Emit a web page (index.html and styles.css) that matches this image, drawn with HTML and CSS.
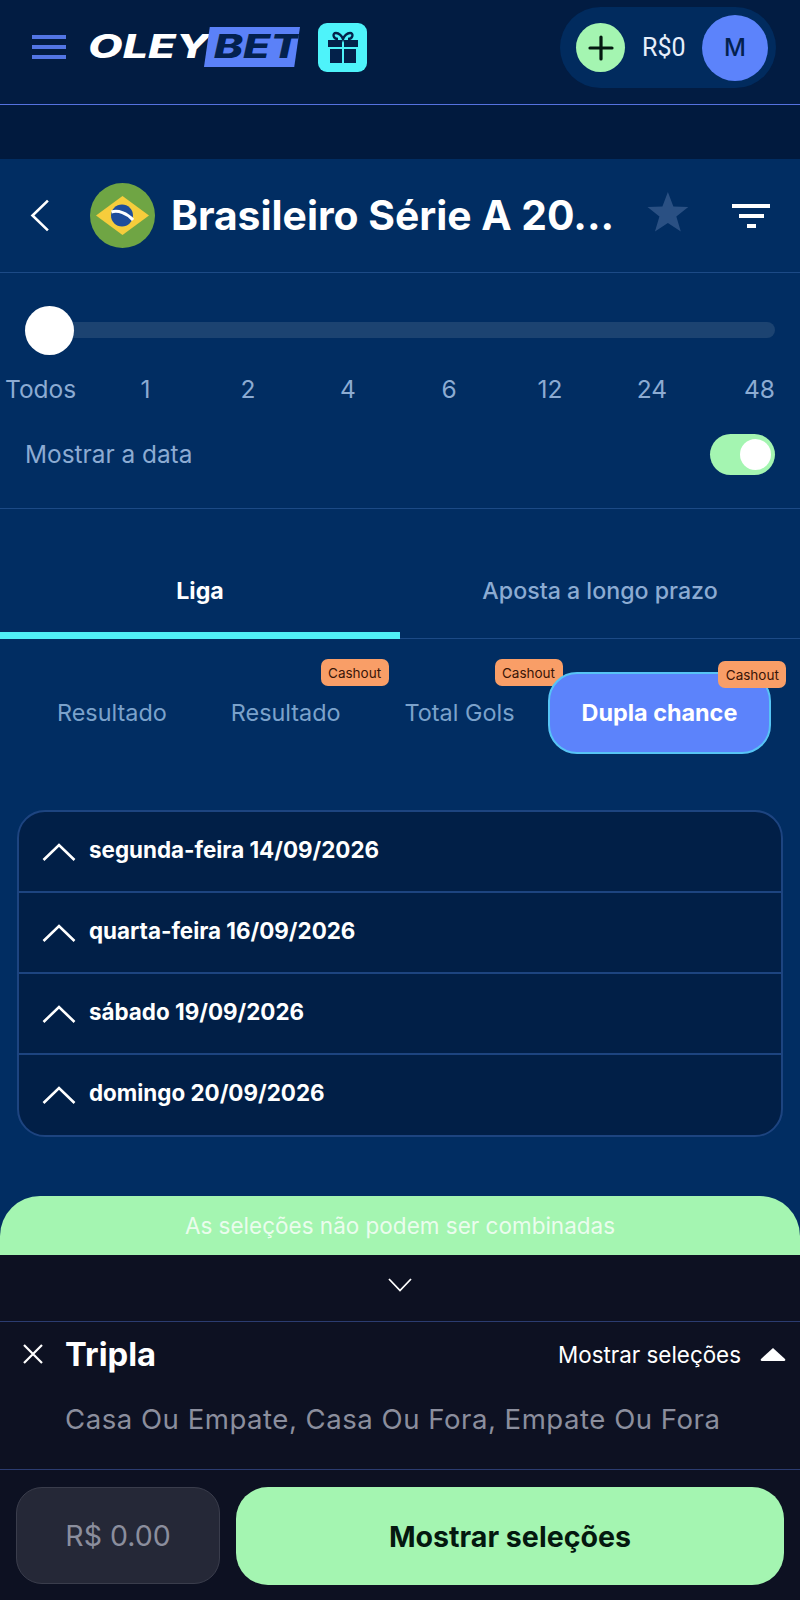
FILE: index.html

```html
<!DOCTYPE html>
<html lang="pt-BR">
<head>
    <meta charset="UTF-8">
    <meta name="viewport" content="width=device-width, initial-scale=1.0">
    <title>OleyBet</title>
    <link rel="stylesheet" href="styles.css">
</head>
<body>
    <div class="page">
        <header class="topbar">
            <div class="burger"><span></span><span></span><span></span></div>
            <div class="logo">
                <span class="logo-oley">OLEY</span>
                <span class="logo-bet"><span class="logo-bet-text">BET</span></span>
            </div>
            <div class="gift">
                <svg width="36" height="36" viewBox="0 0 36 36">
                    <path d="M13 9 C8 9 7 3 11 3 C14 3 17 6 18 9 C19 6 22 3 25 3 C29 3 28 9 23 9" fill="none" stroke="#03214a" stroke-width="2.4"/>
                    <rect x="3" y="10" width="14" height="7" fill="#03214a"/>
                    <rect x="19" y="10" width="14" height="7" fill="#03214a"/>
                    <rect x="5" y="19" width="12" height="14" fill="#03214a"/>
                    <rect x="19" y="19" width="12" height="14" fill="#03214a"/>
                </svg>
            </div>
            <div class="wallet">
                <div class="wallet-add">
                    <svg width="26" height="26" viewBox="0 0 26 26"><path d="M13 2 V24 M2 13 H24" stroke="#04180f" stroke-width="3.2" stroke-linecap="round"/></svg>
                </div>
                <span class="wallet-amount">R$0</span>
                <div class="avatar">M</div>
            </div>
        </header>

        <div class="spacer"></div>

        <main class="panel">
            <section class="title-row">
                <svg class="back" width="20" height="33" viewBox="0 0 20 33"><path d="M18 1.5 L2.5 16.5 L18 31.5" fill="none" stroke="#fff" stroke-width="2.6"/></svg>
                <svg class="flag" width="65" height="65" viewBox="0 0 65 65">
                    <circle cx="32.5" cy="32.5" r="32.5" fill="#6fa544"/>
                    <path d="M32.5 13 L59 32.5 L32.5 52 L6 32.5 Z" fill="#f6cd3c"/>
                    <circle cx="32" cy="32.5" r="11" fill="#1f4d9b"/>
                    <path d="M21.5 29 C28 27 37 30 43 37" fill="none" stroke="#fff" stroke-width="3"/>
                </svg>
                <h1 class="league">Brasileiro Série A 20...</h1>
                <svg class="star" width="42" height="40" viewBox="0 0 42 40"><path d="M21 0 L26.5 14.5 L41.5 15 L29.5 24.5 L34 39.5 L21 31 L8 39.5 L12.5 24.5 L0.5 15 L15.5 14.5 Z" fill="#2a5083"/></svg>
                <div class="filter"><span></span><span></span><span></span></div>
            </section>

            <section class="range">
                <div class="slider"><span class="slider-thumb"></span></div>
                <div class="slider-labels">
                    <span class="first">Todos</span>
                    <span>1</span>
                    <span>2</span>
                    <span>4</span>
                    <span>6</span>
                    <span>12</span>
                    <span>24</span>
                    <span class="last">48</span>
                </div>
                <div class="date-row">
                    <span>Mostrar a data</span>
                    <div class="toggle"><span class="toggle-knob"></span></div>
                </div>
            </section>

            <nav class="tabs">
                <div class="tab active">Liga</div>
                <div class="tab">Aposta a longo prazo</div>
            </nav>

            <div class="markets">
                <div class="market">Resultado</div>
                <div class="market">Resultado<span class="badge">Cashout</span></div>
                <div class="market">Total Gols<span class="badge">Cashout</span></div>
                <div class="market selected">Dupla chance<span class="badge">Cashout</span></div>
            </div>

            <div class="days">
                <div class="day">
                    <svg width="34" height="20" viewBox="0 0 34 20"><path d="M1.5 18 L17 3 L32.5 18" fill="none" stroke="#fff" stroke-width="2.6"/></svg>
                    <span>segunda-feira 14/09/2026</span>
                </div>
                <div class="day">
                    <svg width="34" height="20" viewBox="0 0 34 20"><path d="M1.5 18 L17 3 L32.5 18" fill="none" stroke="#fff" stroke-width="2.6"/></svg>
                    <span>quarta-feira 16/09/2026</span>
                </div>
                <div class="day">
                    <svg width="34" height="20" viewBox="0 0 34 20"><path d="M1.5 18 L17 3 L32.5 18" fill="none" stroke="#fff" stroke-width="2.6"/></svg>
                    <span>sábado 19/09/2026</span>
                </div>
                <div class="day">
                    <svg width="34" height="20" viewBox="0 0 34 20"><path d="M1.5 18 L17 3 L32.5 18" fill="none" stroke="#fff" stroke-width="2.6"/></svg>
                    <span>domingo 20/09/2026</span>
                </div>
            </div>
        </main>

        <section class="slip">
            <div class="slip-notice">As seleções não podem ser combinadas</div>
            <div class="slip-collapse">
                <svg width="24" height="14" viewBox="0 0 24 14"><path d="M1 1 L12 12.5 L23 1" fill="none" stroke="#fff" stroke-width="1.8"/></svg>
            </div>
            <div class="slip-info">
                <div class="slip-head">
                    <svg class="slip-close" width="22" height="22" viewBox="0 0 22 22"><path d="M2 2 L20 20 M20 2 L2 20" stroke="#fff" stroke-width="2.2"/></svg>
                    <span class="slip-type">Tripla</span>
                    <span class="slip-show">Mostrar seleções</span>
                    <svg width="26" height="15" viewBox="0 0 26 15"><path d="M13 1 L25 12 Q26 14 24 14 L2 14 Q0 14 1 12 Z" fill="#fff"/></svg>
                </div>
                <div class="slip-picks">Casa Ou Empate, Casa Ou Fora, Empate Ou Fora</div>
            </div>
            <div class="slip-actions">
                <div class="stake">R$ 0.00</div>
                <button class="show-button">Mostrar seleções</button>
            </div>
        </section>
    </div>
</body>
</html>
```

FILE: styles.css

```css
* {
    box-sizing: border-box;
}
body {
    margin: 0;
    background: #011c42;
    font-family: Inter, "Noto Sans", sans-serif;
    color: #fff;
}
.page {
    width: 800px;
    height: 1600px;
    display: flex;
    flex-direction: column;
    overflow: hidden;
}

/* top bar */
.topbar {
    height: 105px;
    display: flex;
    align-items: flex-start;
    padding: 0 24px 0 32px;
    background: #021c42;
    border-bottom: 1px solid #5572e0;
}
.burger {
    width: 34px;
    margin-top: 35px;
    display: flex;
    flex-direction: column;
    gap: 6px;
}
.burger span {
    height: 4px;
    background: #5275e4;
}
.logo {
    width: 212px;
    height: 40px;
    margin: 27px 0 0 22px;
    display: flex;
    align-items: center;
    flex-shrink: 0;
}
.logo-oley {
    width: 116px;
    font-size: 32px;
    font-weight: 800;
    font-style: italic;
    line-height: 40px;
    transform: scaleX(1.4);
    transform-origin: left center;
}
.logo-bet {
    width: 96px;
    height: 40px;
    background: #5b81f8;
    clip-path: polygon(6% 0, 100% 0, 94% 100%, 0 100%);
    display: block;
    overflow: hidden;
}
.logo-bet-text {
    display: block;
    color: #03214f;
    font-size: 32px;
    font-weight: 800;
    font-style: italic;
    line-height: 40px;
    padding-left: 7px;
    transform: scaleX(1.38);
    transform-origin: left center;
}
.gift {
    width: 49px;
    height: 49px;
    margin: 23px 0 0 18px;
    border-radius: 9px;
    background: #4ef3fa;
    display: flex;
    align-items: center;
    justify-content: center;
}
.wallet {
    width: 216px;
    height: 81px;
    margin: 7px 0 0 auto;
    padding: 0 8px 0 16px;
    border-radius: 41px;
    background: #012b5e;
    display: flex;
    align-items: center;
}
.wallet-add {
    width: 49px;
    height: 49px;
    border-radius: 50%;
    background: #a4f5b1;
    display: flex;
    align-items: center;
    justify-content: center;
}
.wallet-amount {
    margin-left: 17px;
    font-family: Roboto, sans-serif;
    font-size: 25px;
    color: #e6eefa;
}
.avatar {
    width: 66px;
    height: 66px;
    margin-left: auto;
    border-radius: 50%;
    background: #5c83fb;
    color: #03214f;
    font-size: 24px;
    font-weight: 500;
    display: flex;
    align-items: center;
    justify-content: center;
}
.spacer {
    height: 54px;
    background: #011a3e;
}

/* league panel */
.panel {
    flex: 1;
    background: #012d62;
}
.title-row {
    height: 114px;
    display: flex;
    align-items: center;
    padding: 0 30px;
    border-bottom: 1px solid #1c4a86;
}
.flag {
    margin-left: 40px;
    flex-shrink: 0;
}
.league {
    width: 460px;
    margin: -2px 0 0 16px;
    font-size: 40.8px;
    font-weight: 700;
    white-space: nowrap;
}
.star {
    margin-left: 19px;
    margin-top: -8px;
}
.filter {
    margin-left: 43px;
    display: flex;
    flex-direction: column;
    align-items: center;
    gap: 6px;
    width: 38px;
    flex-shrink: 0;
}
.filter span {
    height: 4px;
    width: 38px;
    background: #fff;
}
.filter span:nth-child(2) {
    width: 25px;
}
.filter span:nth-child(3) {
    width: 9px;
}

.range {
    height: 236px;
    padding: 32px 25px 0 5px;
    border-bottom: 1px solid #1c4a86;
}
.slider {
    height: 16px;
    margin: 17px 0 0 20px;
    border-radius: 8px;
    background: #1c4371;
    position: relative;
}
.slider-thumb {
    position: absolute;
    left: 0;
    top: -16px;
    width: 49px;
    height: 49px;
    border-radius: 50%;
    background: #fff;
}
.slider-labels {
    margin-top: 37px;
    display: grid;
    grid-template-columns: 88px 105px 100px 100px 102px 100px 104px 71px;
    font-size: 24.5px;
    line-height: 28px;
    color: #8cabd2;
    text-align: center;
}
.slider-labels .first {
    text-align: left;
}
.slider-labels .last {
    text-align: right;
}
.date-row {
    margin: 30px 0 0 20px;
    display: flex;
    justify-content: space-between;
    align-items: center;
    font-size: 24.4px;
    color: #8cabd2;
}
.toggle {
    width: 65px;
    height: 41px;
    margin-top: 1px;
    border-radius: 21px;
    background: #a4f5b1;
    position: relative;
}
.toggle-knob {
    position: absolute;
    right: 4px;
    top: 5px;
    width: 31px;
    height: 31px;
    border-radius: 50%;
    background: #fff;
}

.tabs {
    height: 130px;
    display: flex;
    border-bottom: 1px solid #1c4a86;
}
.tab {
    flex: 1;
    height: 130px;
    padding-top: 68px;
    text-align: center;
    font-size: 23.2px;
    line-height: 28px;
    font-weight: 500;
    color: #8cabd2;
}
.tab.active {
    color: #fff;
    font-weight: 700;
    border-bottom: 7px solid #4ff0f7;
}

.markets {
    display: flex;
    margin: 33px 0 0 25px;
    height: 82px;
}
.market {
    position: relative;
    padding: 0 32px 2px;
    display: flex;
    align-items: center;
    font-size: 23.4px;
    color: #7ba2cb;
}
.market.selected {
    margin-left: 1px;
    border: 2px solid #57c4f5;
    border-radius: 29px;
    background: #5c83fb;
    color: #fff;
    font-weight: 700;
}
.badge {
    position: absolute;
    right: -16px;
    top: -13px;
    width: 68px;
    height: 27px;
    border-radius: 7px;
    background: #f99e67;
    color: #3a1508;
    font-size: 13.5px;
    font-weight: 400;
    display: flex;
    align-items: center;
    justify-content: center;
}
.market.selected .badge {
    top: -13px;
    right: -17px;
}

.days {
    margin: 56px 17px 0;
    border: 2px solid #1d4480;
    border-radius: 28px;
    background: #011f47;
    overflow: hidden;
}
.day {
    height: 81px;
    padding: 0 0 5px 23px;
    display: flex;
    align-items: center;
    gap: 13px;
    font-size: 22.4px;
    font-weight: 700;
    border-bottom: 2px solid #1d4480;
}
.day:last-child {
    height: 80px;
    border-bottom: none;
}
.day svg {
    margin-top: 5px;
}

/* bet slip */
.slip {
    height: 404px;
    flex-shrink: 0;
    margin-top: -1px;
    background: #012d62;
}
.slip-notice {
    height: 59px;
    border-radius: 40px 40px 0 0;
    background: #a4f5b1;
    color: rgba(255, 255, 255, 0.8);
    font-size: 22.5px;
    display: flex;
    align-items: center;
    justify-content: center;
}
.slip-collapse {
    height: 67px;
    padding-bottom: 6px;
    background: #0d1122;
    border-bottom: 1px solid #2b3c70;
    display: flex;
    align-items: center;
    justify-content: center;
}
.slip-info {
    height: 148px;
    padding: 0 14px 0 22px;
    background: #0d1122;
    border-bottom: 1px solid #2b3c70;
}
.slip-head {
    height: 64px;
    display: flex;
    align-items: center;
}
.slip-close {
    flex-shrink: 0;
}
.slip-type {
    margin-left: 21px;
    font-size: 32.8px;
    font-weight: 700;
}
.slip-show {
    margin: 0 19px 0 auto;
    font-size: 22.4px;
}
.slip-picks {
    margin: 16px 0 0 43px;
    font-size: 27.6px;
    letter-spacing: 0.5px;
    color: #8b8e9d;
}
.slip-actions {
    height: 130px;
    padding: 17px 16px 15px;
    background: #0d1122;
    display: flex;
    gap: 16px;
}
.stake {
    width: 204px;
    height: 97px;
    border: 1px solid #3a3d4c;
    border-radius: 26px;
    background: #252837;
    color: #8b8e9d;
    font-size: 28.5px;
    display: flex;
    align-items: center;
    justify-content: center;
}
.show-button {
    flex: 1;
    height: 98px;
    border: none;
    border-radius: 32px;
    background: #a4f5b1;
    color: #04180f;
    font-family: Inter, sans-serif;
    font-size: 28.6px;
    font-weight: 700;
}
```
